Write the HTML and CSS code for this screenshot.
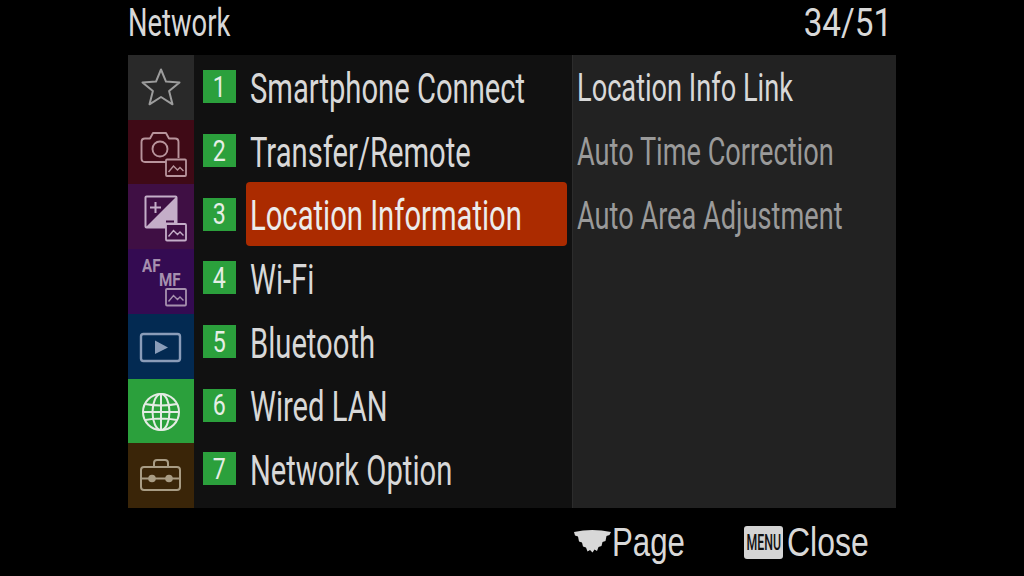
FILE: index.html
```html
<!DOCTYPE html>
<html lang="en">
<head>
<meta charset="utf-8">
<title>Network</title>
<link rel="stylesheet" href="styles.css">
</head>
<body>
<div class="screen">
  <header class="top">
    <span class="title">Network</span>
    <span class="count">34/51</span>
  </header>
  <main class="panel">
    <nav class="rail">
      <div class="tab tab-star">
        <svg viewBox="0 0 66 65" class="ico"><path d="M33 14.500L38 26.600 51.500 27.500 41.100 36.100 44.500 49.300 33 42 21.500 49.300 24.900 36.100 14.500 27.500 28 26.600z" fill="none" stroke="#9c9c9c" stroke-width="2" stroke-linejoin="round"/></svg>
      </div>
      <div class="tab tab-shoot">
        <svg viewBox="0 0 66 65" class="ico"><g fill="none" stroke="#b8949c" stroke-width="1.900" stroke-linejoin="round"><path d="M38 42H17q-3.500 0-3.500-3.500V22q0-3.500 3.500-3.500h5l3-5.500h13l3 5.500h6q3.500 0 3.500 3.500v16"/><circle cx="32" cy="29" r="7.500"/></g><rect x="38" y="39.500" width="20" height="16.500" rx="1" fill="#3f0a16" stroke="#b8949c" stroke-width="1.800"/><path d="M40.500 52l5-6 4 4 2.500-2.500 3.500 3.500" fill="none" stroke="#b8949c" stroke-width="1.400"/></svg>
      </div>
      <div class="tab tab-expo">
        <svg viewBox="0 0 66 65" class="ico"><rect x="17.500" y="12.500" width="31" height="31" rx="1" fill="none" stroke="#c4aec8" stroke-width="2"/><path d="M48 13v30H18z" fill="#c4aec8"/><path d="M22 23.500h11M27.500 18v11" stroke="#c4aec8" stroke-width="2"/><path d="M38 37.500h8" stroke="#3f0f44" stroke-width="2"/><rect x="38" y="40" width="20" height="16.500" rx="1" fill="#3f0f44" stroke="#c4aec8" stroke-width="1.800"/><path d="M40.500 52.500l5-6 4 4 2.500-2.500 3.500 3.500" fill="none" stroke="#c4aec8" stroke-width="1.400"/></svg>
      </div>
      <div class="tab tab-af">
        <span class="af">AF</span><span class="mf">MF</span>
        <svg viewBox="0 0 66 65" class="ico"><rect x="38" y="40" width="20" height="16.500" rx="1" fill="none" stroke="#a690ae" stroke-width="1.800"/><path d="M40.500 52.500l5-6 4 4 2.500-2.500 3.500 3.500" fill="none" stroke="#a690ae" stroke-width="1.400"/></svg>
      </div>
      <div class="tab tab-play">
        <svg viewBox="0 0 66 65" class="ico"><rect x="13" y="20" width="39" height="27" rx="2.500" fill="none" stroke="#8a9cb8" stroke-width="2.400"/><path d="M27 26.500L40 33.500 27 40z" fill="#8a9cb8"/></svg>
      </div>
      <div class="tab tab-net">
        <svg viewBox="0 0 66 65" class="ico"><g fill="none" stroke="#e4ece4" stroke-width="2"><circle cx="33" cy="33" r="18"/><ellipse cx="33" cy="33" rx="8.500" ry="18"/><path d="M33 15v36M17 25q16 3 32 0M15 33h36M17 41q16-3 32 0"/></g></svg>
      </div>
      <div class="tab tab-tool">
        <svg viewBox="0 0 66 65" class="ico"><g fill="none" stroke="#a89c84" stroke-width="2"><rect x="13" y="24" width="39" height="23" rx="3"/><path d="M26 24v-4q0-3 3-3h8q3 0 3 3v4M13 35.500h39"/></g><circle cx="24" cy="35.500" r="3.800" fill="#a89c84"/><circle cx="41" cy="35.500" r="3.800" fill="#a89c84"/></svg>
      </div>
    </nav>
    <ul class="list">
      <li class="row"><span class="num"><span class="num-text">1</span></span><span class="item"><span class="label">Smartphone Connect</span></span></li>
      <li class="row"><span class="num"><span class="num-text">2</span></span><span class="item"><span class="label">Transfer/Remote</span></span></li>
      <li class="row"><span class="num"><span class="num-text">3</span></span><span class="item item-on"><span class="label">Location Information</span></span></li>
      <li class="row"><span class="num"><span class="num-text">4</span></span><span class="item"><span class="label">Wi-Fi</span></span></li>
      <li class="row"><span class="num"><span class="num-text">5</span></span><span class="item"><span class="label">Bluetooth</span></span></li>
      <li class="row"><span class="num"><span class="num-text">6</span></span><span class="item"><span class="label">Wired LAN</span></span></li>
      <li class="row"><span class="num"><span class="num-text">7</span></span><span class="item"><span class="label">Network Option</span></span></li>
    </ul>
    <ul class="sub">
      <li class="sub-row"><span class="sub-text on">Location Info Link</span></li>
      <li class="sub-row"><span class="sub-text">Auto Time Correction</span></li>
      <li class="sub-row"><span class="sub-text">Auto Area Adjustment</span></li>
    </ul>
  </main>
  <footer class="bottom">
    <span class="hint hint-page">
      <svg viewBox="0 0 38 26" class="dial"><path d="M0 3q18-4 37 0l-1.500 3-3 1-1 5-3 1-1 4-3 1-1.500 4-2.500-1.500-2 3-2.500-2.500-2.500 1.500-1.500-4-3-1-1-4-3-1-1-5-3-1z" fill="#d8d8d8"/></svg>
      <span class="foot-text">Page</span>
    </span>
    <span class="hint">
      <span class="menu"><span class="menu-text">MENU</span></span>
      <span class="foot-text close">Close</span>
    </span>
  </footer>
</div>
</body>
</html>
```
FILE: styles.css
```css
* { box-sizing: border-box; margin: 0; padding: 0; }
html, body { width: 1024px; height: 576px; background: #000; overflow: hidden; }
body { font-family: "Roboto", sans-serif; color: #d8d8d8; }
ul { list-style: none; }
.screen { width: 768px; height: 576px; margin-left: 128px; display: flex; flex-direction: column; }
.top { height: 55px; flex: none; display: flex; justify-content: space-between; align-items: center; padding: 0 0 9px 0; font-size: 38px; white-space: nowrap; }
.title { display: inline-block; transform: scaleX(.72); transform-origin: left center; }
.count { display: inline-block; margin-right: 4px; transform: scaleX(.875); transform-origin: right center; }
.panel { height: 453px; flex: none; display: grid; grid-template-columns: 66px 378px 324px; grid-template-rows: 453px; background: #111; overflow: hidden; }
.rail { display: grid; grid-template-rows: repeat(7, 64.71px); }
.tab { position: relative; overflow: hidden; min-height: 0; }
.tab-star { background: #292929; }
.tab-shoot { background: #3f0a16; }
.tab-expo { background: #3f0f44; }
.tab-af { background: #340b52; }
.tab-play { background: #032a52; }
.tab-net { background: #2ba03c; }
.tab-tool { background: #3a2508; }
.ico { display: block; width: 66px; height: 65px; }
.af, .mf { position: absolute; font-weight: 700; color: #a690ae; font-size: 19px; line-height: 1; transform: scaleX(.8); transform-origin: left top; }
.af { left: 14px; top: 7px; }
.mf { left: 31px; top: 21px; }
.list { display: grid; grid-template-rows: repeat(7, 63.7px); min-width: 0; }
.row { display: flex; align-items: center; padding-left: 9px; font-size: 42px; white-space: nowrap; min-width: 0; }
.num { width: 33px; height: 33px; flex: none; background: #2ba03c; color: #e6eee6; font-size: 29px; display: flex; align-items: center; justify-content: center; margin-right: 10px; }
.num-text { display: inline-block; transform: scaleX(.8); }
.item { width: 321px; flex: none; height: 64px; padding: 3px 0 0 4px; display: flex; align-items: center; border-radius: 4px; overflow: visible; }
.label { display: inline-block; transform: scaleX(.695); transform-origin: left center; }
.item-on { background: #ab2b00; color: #ececec; }
.sub { background: #222; border-left: 1px solid #2c2c2c; display: grid; grid-template-rows: repeat(7, 63.7px); min-width: 0; }
.sub-row { display: flex; align-items: center; padding: 3px 0 0 4px; font-size: 38px; white-space: nowrap; }
.sub-text { color: #9a9a9a; display: inline-block; transform: scaleX(.715); transform-origin: left center; }
.on { color: #d8d8d8; }
.bottom { flex: 1; display: flex; align-items: center; padding-left: 446px; font-size: 40px; }
.hint { display: flex; align-items: center; gap: 0; }
.hint-page { width: 170px; }
.foot-text { display: inline-block; font-family: "Liberation Sans", sans-serif; transform: scaleX(.78); transform-origin: left center; }
.close { margin-left: 4px; transform: scaleX(.8); }
.dial { width: 38px; height: 26px; flex: none; }
.menu { width: 39px; height: 33px; flex: none; background: #d4d4d4; border-radius: 3px; color: #111; display: flex; align-items: center; justify-content: center; overflow: hidden; }
.menu-text { font-size: 22px; font-weight: 500; transform: scaleX(.56); }
```
